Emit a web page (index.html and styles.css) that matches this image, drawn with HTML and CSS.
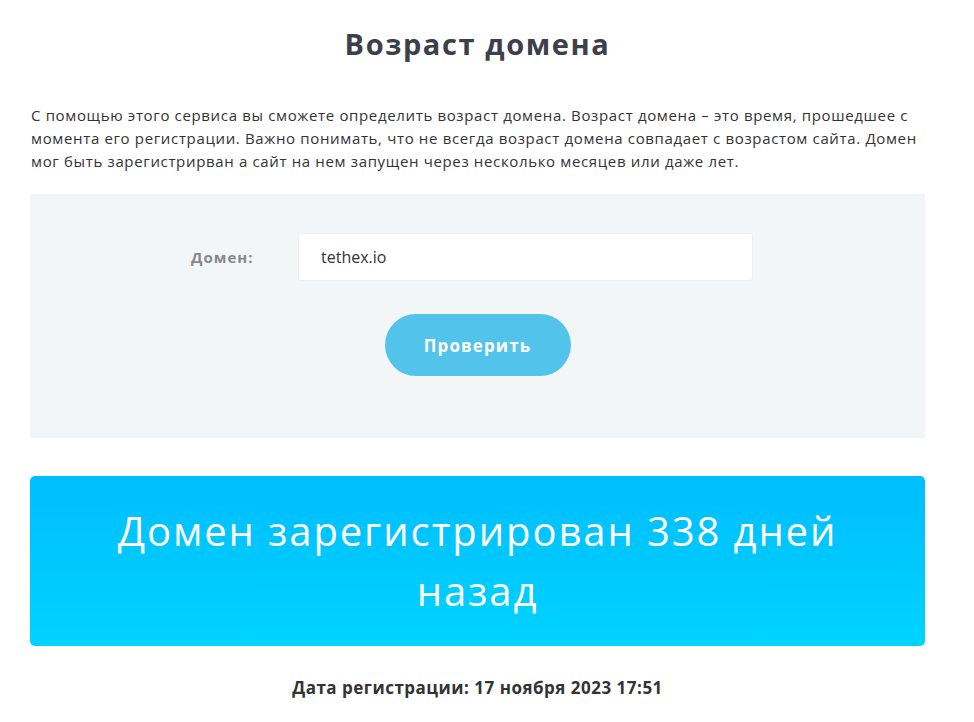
FILE: index.html
```html
<!DOCTYPE html>
<html lang="ru">
<head>
    <meta charset="UTF-8">
    <meta name="viewport" content="width=device-width, initial-scale=1.0">
    <title>Возраст домена</title>
    <link rel="stylesheet" href="styles.css">
</head>
<body>
    <div class="page">
        <h1>Возраст домена</h1>
        <p class="intro">С помощью этого сервиса вы сможете определить возраст домена. Возраст домена – это время, прошедшее с момента его регистрации. Важно понимать, что не всегда возраст домена совпадает с возрастом сайта. Домен мог быть зарегистрирван а сайт на нем запущен через несколько месяцев или даже лет.</p>

        <form class="check-form" id="domainForm">
            <div class="form-row">
                <label for="domain">Домен:</label>
                <input type="text" id="domain" name="domain" value="tethex.io">
            </div>
            <button type="submit">Проверить</button>
        </form>

        <div class="result">Домен зарегистрирован 338 дней назад</div>

        <p class="reg-date">Дата регистрации: 17 ноября 2023 17:51</p>
    </div>
</body>
</html>
```

FILE: styles.css
```css
body {
    font-family: "Open Sans", Arial, sans-serif;
    background-color: #fff;
    color: #333;
    margin: 0;
    padding: 0;
}

.page {
    width: 895px;
    margin: 0 30px;
    padding-top: 24px;
}

h1 {
    font-size: 29px;
    font-weight: 700;
    letter-spacing: 1.6px;
    color: #3c404b;
    text-align: center;
    margin: 0;
    line-height: 40px;
}

.intro {
    font-size: 15px;
    letter-spacing: 0.65px;
    line-height: 23px;
    margin: 40px 0 0 1px;
    color: #333;
}

.check-form {
    background-color: #f3f6f7;
    margin-top: 21px;
    height: 244px;
    box-sizing: border-box;
    padding-top: 39px;
    display: flex;
    flex-direction: column;
    align-items: center;
}

.form-row {
    display: flex;
    align-items: center;
    margin-left: -11px;
}

label {
    font-weight: 700;
    font-size: 15px;
    letter-spacing: 1px;
    color: #888;
    width: 107px;
}

input[type="text"] {
    width: 455px;
    height: 48px;
    box-sizing: border-box;
    padding: 0 22px;
    border: 1px solid #eceff1;
    border-radius: 3px;
    font-family: "Open Sans", Arial, sans-serif;
    font-size: 16px;
    color: #333;
    background: #fff;
}

button {
    margin-top: 33px;
    width: 186px;
    height: 62px;
    background-color: #52c3eb;
    color: #fff;
    border: none;
    border-radius: 31px;
    font-family: "Open Sans", Arial, sans-serif;
    font-weight: 700;
    font-size: 17px;
    letter-spacing: 1.1px;
    cursor: pointer;
}

.result {
    margin-top: 38px;
    height: 170px;
    box-sizing: border-box;
    padding: 0 60px;
    border-radius: 5px;
    background: linear-gradient(to bottom, #00bdff, #00d3ff);
    color: #fff;
    font-size: 40px;
    letter-spacing: 1.9px;
    line-height: 60px;
    text-align: center;
    display: flex;
    align-items: center;
    justify-content: center;
}

.reg-date {
    text-align: center;
    font-weight: 700;
    font-size: 17px;
    letter-spacing: 0.5px;
    color: #333;
    margin: 30px 0 0;
}
```
